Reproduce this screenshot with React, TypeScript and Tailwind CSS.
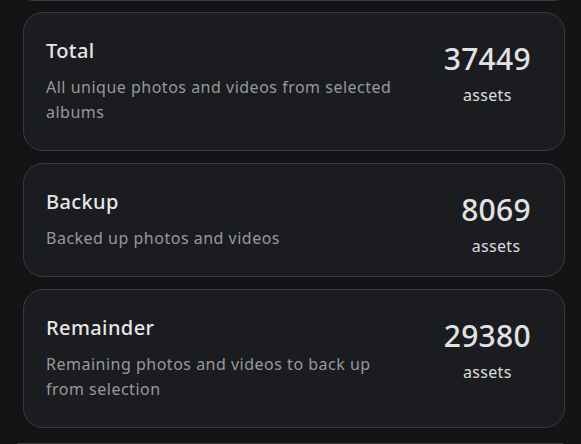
import React from "react";

type Item = { title: string; desc: string; count: string };

const items: Item[] = [
  { title: "Total", desc: "All unique photos and videos from selected albums", count: "37449" },
  { title: "Backup", desc: "Backed up photos and videos", count: "8069" },
  { title: "Remainder", desc: "Remaining photos and videos to back up from selection", count: "29380" },
];

function Card({ item }: { item: Item }) {
  return (
    <div className="flex items-start rounded-[20px] border border-[#3a3b3f] bg-[#1b1c1f] pl-[22px] pr-[33px] pt-[24px] pb-[18px]">
      <div className="flex-1 min-w-0 pr-[40px] pb-[7px]">
        <div className="text-[20px] leading-[28px] font-medium text-[#e6e6e8] tracking-[0.4px]">{item.title}</div>
        <div className="mt-[10px] text-[16px] leading-[25px] text-[#97989c] tracking-[0.5px] max-w-[350px]">{item.desc}</div>
      </div>
      <div className="mt-[7px] flex flex-col items-center">
        <div className="text-[30px] leading-[30px] font-medium text-[#e2e2e5] tracking-[0.3px]">{item.count}</div>
        <div className="mt-[10px] text-[16px] leading-[22px] text-[#dcdcde] tracking-[0.3px]">assets</div>
      </div>
    </div>
  );
}

export default function App() {
  return (
    <div
      className="w-[581px] h-[444px] overflow-hidden bg-[#131416]"
      style={{ fontFamily: '"Noto Sans", "Open Sans", sans-serif' }}
    >
      <div className="pl-[23px] pr-[16px]">
        <div className="mt-[-19px] h-[20px] rounded-[20px] border border-[#3a3b3f] bg-[#1b1c1f]" />
        <div className="mt-[11px] flex flex-col gap-[12px]">
          {items.map((it) => (
            <Card key={it.title} item={it} />
          ))}
        </div>
      </div>
      <div className="mt-[15px] ml-[17px] w-[546px] h-[2px] bg-[#3a3b3f]" />
    </div>
  );
}
